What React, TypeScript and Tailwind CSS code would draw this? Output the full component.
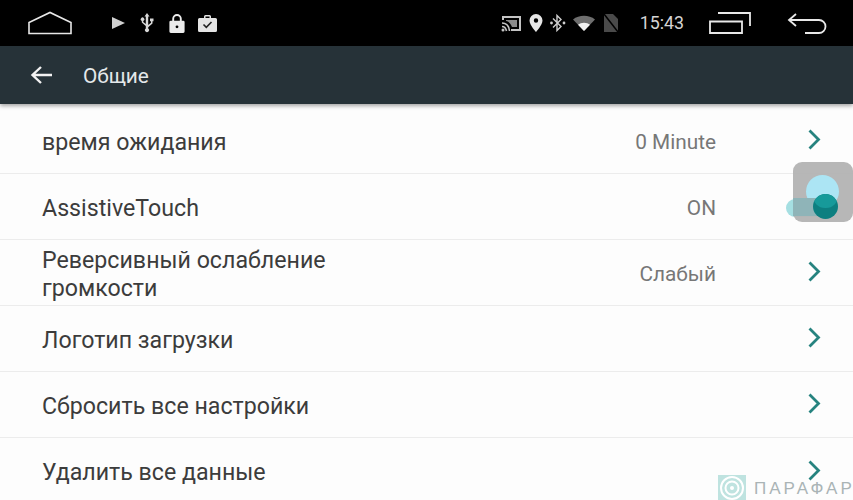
function StatusBar() {
  return (
    <div className="h-[46px] bg-black flex items-center text-[#dcdcdc] shrink-0">
      {/* home */}
      <svg width="44" height="24" viewBox="0 0 44 24" className="ml-[28px]" fill="none" stroke="#e8e8e8" strokeWidth="1.6">
        <path d="M1 22.5V11.5L22 1.5L43 11.5V22.5Z" />
      </svg>
      <div className="ml-[40px] flex items-center">
        <svg width="13" height="14" viewBox="0 0 13 14" fill="#d0d0d0">
          <path d="M0 1L13 7L0 13Z" />
        </svg>
        <svg width="16" height="20" viewBox="0 0 16 20" className="ml-[14px]" fill="#d8d8d8">
          <path d="M8 0L10.500 3.500H9.200V12L12 9.800V8.300H11V5.500H14.500V8.300H13.500V10.600L9.200 14.200V15.600A2 2 0 1 1 6.800 15.600V13L2.800 9.600V8A1.800 1.800 0 1 1 4.300 8V9L6.800 11V3.500H5.500Z" />
        </svg>
        <svg width="16" height="19" viewBox="0 0 16 20" className="ml-[14px]" fill="#ececec">
          <path fillRule="evenodd" d="M3 7V5A5 5 0 0 1 13 5V7H14.500A1.500 1.500 0 0 1 16 8.500V18.500A1.500 1.500 0 0 1 14.500 20H1.500A1.500 1.500 0 0 1 0 18.500V8.500A1.500 1.500 0 0 1 1.500 7ZM5 7H11V5A3 3 0 0 0 5 5ZM8 12A1.500 1.500 0 1 0 8 15A1.500 1.500 0 1 0 8 12Z" />
        </svg>
        <svg width="19" height="18" viewBox="0 0 19 18" className="ml-[13px]">
          <path fill="#e4e4e4" fillRule="evenodd" d="M6 4V2.500A1.500 1.500 0 0 1 7.500 1H11.500A1.500 1.500 0 0 1 13 2.500V4H17.500A1.500 1.500 0 0 1 19 5.500V16.500A1.500 1.500 0 0 1 17.500 18H1.500A1.500 1.500 0 0 1 0 16.500V5.500A1.500 1.500 0 0 1 1.500 4ZM7.500 4H11.500V2.500H7.500Z" />
          <path d="M5.500 10.500L8.300 13.300L13.500 8" fill="none" stroke="#222" strokeWidth="1.600" />
        </svg>
      </div>
      <div className="ml-auto flex items-center">
        <svg width="20" height="17" viewBox="0 0 20 17" fill="none">
          <path d="M2 5V2H19V15H10" stroke="#c4c4c4" strokeWidth="2" />
          <path d="M5 5H16V12H11C10 9 8 6.500 5 6Z" fill="#8a8a8a" />
          <path d="M1 8C5 8 8 11 8.500 16M1 11.500C3.500 11.500 5 13.500 5.500 16" stroke="#c4c4c4" strokeWidth="1.600" />
          <circle cx="2" cy="15" r="1.500" fill="#c4c4c4" />
        </svg>
        <svg width="14" height="18" viewBox="0 0 14 18" className="ml-[8px]">
          <path fill="#e6e6e6" fillRule="evenodd" d="M7 0A6.500 6.500 0 0 1 13.500 6.500C13.500 11 7 18 7 18C7 18 .5 11 .5 6.500A6.500 6.500 0 0 1 7 0ZM7 4.300A2.200 2.200 0 1 0 7 8.700A2.200 2.200 0 1 0 7 4.300Z" />
        </svg>
        <svg width="16" height="18" viewBox="0 0 16 18" className="ml-[7px]" fill="none" stroke="#cfcfcf" strokeWidth="1.400">
          <path d="M3 4.500L11 12.500L7 16.500V1.500L11 5.500L3 13.500" />
          <circle cx="1.500" cy="9" r=".7" fill="#cfcfcf" />
          <circle cx="14" cy="9" r=".7" fill="#cfcfcf" />
        </svg>
        <svg width="22" height="16" viewBox="0 0 22 16" className="ml-[7px]">
          <path d="M0 4.500C6 -.5 16 -.5 22 4.500L11 16Z" fill="#6e6e6e" />
          <path d="M5 9.800C8 7 14 7 17 9.800L11 16Z" fill="#f0f0f0" />
        </svg>
        <svg width="16" height="20" viewBox="0 0 16 20" className="ml-[8px]">
          <path d="M1 1H10L15 6V19H1Z" fill="#4a4a4a" />
          <path d="M1 1L15 19" stroke="#000" strokeWidth="1.500" />
        </svg>
        <span className="ml-[21px] text-[17.800px] text-[#d4d4d4] leading-none">15:43</span>
        <svg width="42" height="22" viewBox="0 0 42 22" className="ml-[25px]" fill="none" stroke="#e8e8e8" strokeWidth="1.800">
          <path d="M1 9.500H33V21H1Z" />
          <path d="M9 1H41V14" />
        </svg>
        <svg width="40" height="22" viewBox="0 0 40 22" className="ml-[36px] mr-[26px]" fill="none" stroke="#e8e8e8" strokeWidth="1.800">
          <path d="M9 2L2 8L9 14" />
          <path d="M2 8H32A6.500 6.500 0 0 1 32 21H18" />
        </svg>
      </div>
    </div>
  );
}

function Chevron() {
  return (
    <svg width="13" height="21" viewBox="0 0 13 21" fill="none" stroke="#26837f" strokeWidth="2.800" className="ml-[92px] mr-[5px] mb-[2px] shrink-0">
      <path d="M1.500 1.500L10.500 10.500L1.500 19.500" />
    </svg>
  );
}

function Row({ title, value, wide, noBorder }: { title: React.ReactNode; value?: string; wide?: boolean; noBorder?: boolean }) {
  return (
    <div className={`h-[66px] shrink-0 flex items-center pl-[42px] pr-[27px] ${noBorder ? "" : "border-b border-[#ececec]"}`}>
      <div className={`text-[#3c3c3c] text-[23.200px] ${wide ? "pt-[2px] leading-[28px]" : "pt-[4px] leading-none"}`}>{title}</div>
      <div className="ml-auto pt-[4px] text-[#777777] text-[20.800px] leading-none">{value}</div>
      <Chevron />
    </div>
  );
}

export default function App() {
  return (
    <div className="relative w-[853px] h-[500px] overflow-hidden bg-[#fdfdfd] flex flex-col" style={{ fontFamily: "Roboto, sans-serif" }}>
      <StatusBar />
      <div className="h-[58px] shrink-0 bg-[#263238] flex items-center pl-[30px] shadow-[0_2px_4px_rgba(0,0,0,0.35)] z-10">
        <svg width="22" height="20" viewBox="0 0 22 20" fill="none" stroke="#f2f2f2" strokeWidth="2.400">
          <path d="M11 2L2.500 10L11 18M2.500 10H22" />
        </svg>
        <span className="ml-[31px] pt-[2px] text-[#e4e8ea] text-[20.800px] leading-none">Общие</span>
      </div>
      <div className="flex flex-col pt-[4px]">
        <Row title="время ожидания" value="0 Minute" />
        <div className="h-[66px] shrink-0 flex items-center pl-[42px] pr-[27px] border-b border-[#ececec]">
          <div className="pt-[4px] text-[#3c3c3c] text-[23.200px] leading-none">AssistiveTouch</div>
          <div className="ml-auto pt-[4px] text-[#777777] text-[20.800px] leading-none">ON</div>
          {/* switch */}
          <div className="relative ml-[70px] w-[40px] h-[20px] shrink-0">
            <div className="absolute left-0 right-0 top-[2px] h-[18px] rounded-full bg-[#a5dfe2]" />
          </div>
        </div>
        <Row
          wide
          title={
            <>
              Реверсивный ослабление
              <br />
              громкости
            </>
          }
          value="Слабый"
        />
        <Row title="Логотип загрузки" />
        <Row title="Сбросить все настройки" />
        <Row title="Удалить все данные" noBorder />
      </div>

      {/* assistive touch overlay */}
      <div className="absolute left-[793px] top-[162px] w-[60px] h-[60px] rounded-[9px] bg-[#b4b4b4] opacity-95">
        <div className="absolute left-[13px] top-[13px] w-[33px] h-[33px] rounded-full bg-[#a8e4f4]" />
      </div>
      <div className="absolute left-[793px] top-[198px] w-[24px] h-[18px] bg-[#8fb4b8]" />
      <div className="absolute left-[813px] top-[194px] w-[25px] h-[25px] rounded-full overflow-hidden bg-[#0d7f80]">
        <div className="w-[25px] h-[14px] rounded-b-[12px] bg-[#179a9a]" />
      </div>

      {/* watermark */}
      <div className="absolute left-[718px] top-[475px] flex items-center">
        <svg width="28" height="26" viewBox="0 0 28 26" fill="none">
          <rect width="28" height="26" fill="#bfe3e0" />
          <circle cx="14" cy="13" r="11" stroke="#fff" strokeWidth="2" />
          <circle cx="14" cy="13" r="6.500" stroke="#fff" strokeWidth="2" />
          <circle cx="14" cy="13" r="2" fill="#fff" />
        </svg>
        <span className="ml-[8px] text-[17px] tracking-[3px] text-[#aab4b6] leading-none whitespace-nowrap" style={{ fontFamily: "'Liberation Sans', sans-serif" }}>
          ПАРАФАР
        </span>
      </div>
    </div>
  );
}
